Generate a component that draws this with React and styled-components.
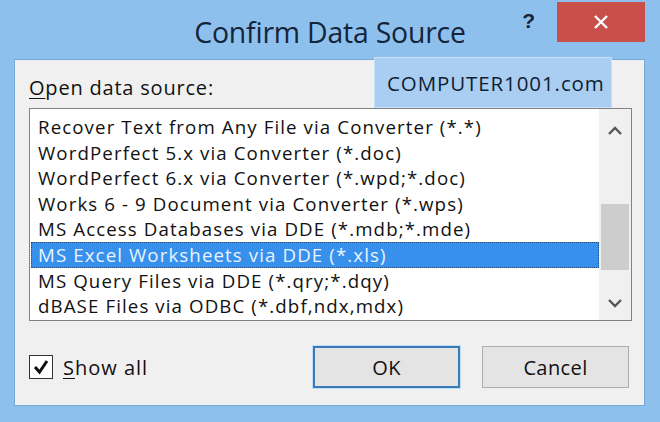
import React, { useState } from 'react';
import styled, { createGlobalStyle } from 'styled-components';

const GlobalStyle = createGlobalStyle`
  html, body {
    margin: 0;
    padding: 0;
    background: #8ec0ee;
  }
  body {
    font-family: "Open Sans", "Noto Sans", sans-serif;
  }
`;

const Window = styled.div`
  width: 660px;
  height: 422px;
  background: #8ec0ee;
  display: flex;
  flex-direction: column;
  box-sizing: border-box;
  overflow: hidden;
`;

const TitleBar = styled.header`
  height: 59px;
  display: grid;
  grid-template-columns: 1fr auto 1fr;
  align-items: start;
`;

const Title = styled.h1`
  grid-column: 2;
  margin: 13px 0 0;
  font-weight: 400;
  font-size: 28.4px;
  color: #14243a;
  letter-spacing: -0.2px;
`;

const Controls = styled.div`
  grid-column: 3;
  justify-self: end;
  display: flex;
  align-items: flex-start;
  margin-right: 15px;
`;

const HelpButton = styled.span`
  margin: 9px 22px 0 0;
  font: 700 21px "Liberation Sans", Arial, sans-serif;
  color: #14243a;
`;

const CloseButton = styled.div`
  width: 88px;
  height: 40px;
  margin-top: 2px;
  background: #c9504a;
  display: flex;
  align-items: center;
  justify-content: center;
`;

const Client = styled.main`
  position: relative;
  flex: 1;
  margin: 0 15px 16px 14px;
  background: #f0f0f0;
  border: 1px solid #79a9d8;
  padding: 0 14px;
  display: flex;
  flex-direction: column;
`;

const Watermark = styled.div`
  position: absolute;
  left: 359px;
  top: -3px;
  width: 238px;
  height: 51px;
  box-sizing: border-box;
  background: #a9cef2;
  border: 1px solid #c8e1f8;
  display: flex;
  align-items: center;
  padding-left: 12px;
  font-size: 20.5px;
  color: #0f1e33;
  letter-spacing: 0.9px;
`;

const Label = styled.div`
  margin-top: 14px;
  height: 34px;
  font-size: 20px;
  letter-spacing: 0.8px;
  color: #111;
  u { text-decoration-thickness: 1px; text-underline-offset: 3px; }
`;

const ListBox = styled.div`
  width: 603px;
  height: 213px;
  box-sizing: border-box;
  border: 1px solid #828282;
  background: #fff;
  display: flex;
`;

const Items = styled.ul`
  flex: 1;
  margin: 0;
  padding: 5px 0 0 1px;
  list-style: none;
`;

const Item = styled.li`
  height: 25.6px;
  line-height: 25.6px;
  padding-left: 7px;
  font-size: 18.7px;
  letter-spacing: 1.1px;
  white-space: nowrap;
  color: ${p => (p.$selected ? '#e9f3ff' : '#111')};
  background: ${p => (p.$selected ? '#3790ec' : 'transparent')};
  outline: ${p => (p.$selected ? '1px dotted #1c4f86' : 'none')};
  outline-offset: -1px;
`;

const ScrollBar = styled.div`
  width: 32px;
  background: #f0f0f0;
  display: flex;
  flex-direction: column;
  align-items: center;
`;

const Arrow = styled.div`
  height: 34px;
  display: flex;
  align-items: center;
  justify-content: center;
  margin-top: ${p => p.$top || 0}px;
`;

const Track = styled.div`
  flex: 1;
  width: 100%;
  display: flex;
  flex-direction: column;
  align-items: center;
`;

const Thumb = styled.div`
  width: 28px;
  height: 66px;
  margin-top: 56px;
  background: #cdcdcd;
`;

const Footer = styled.footer`
  display: flex;
  align-items: center;
  margin-top: 25px;
`;

const CheckLabel = styled.label`
  display: flex;
  align-items: center;
  gap: 10px;
  font-size: 20px;
  letter-spacing: 1px;
  color: #111;
  u { text-decoration-thickness: 1px; text-underline-offset: 3px; }
`;

const Box = styled.span`
  width: 22px;
  height: 22px;
  border: 1px solid #333;
  background: #fff;
  display: flex;
  align-items: center;
  justify-content: center;
`;

const Buttons = styled.div`
  margin-left: auto;
  margin-right: 1px;
  display: flex;
  gap: 22px;
`;

const Button = styled.button`
  width: 147px;
  height: 42px;
  box-sizing: border-box;
  font-family: "Open Sans", "Noto Sans", sans-serif;
  font-size: 20px;
  letter-spacing: 0.4px;
  color: #111;
  background: #e4e4e4;
  border: ${p => (p.$default ? '2px solid #3b7bb5' : '1px solid #adadad')};
  box-shadow: ${p => (p.$default ? '0 0 0 1px #bfe0f8' : 'none')};
  padding: 0;
`;

const Chevron = ({ up }) => (
  <svg width="16" height="10" viewBox="0 0 16 10">
    <path
      d={up ? 'M2 8 L8 2 L14 8' : 'M2 2 L8 8 L14 2'}
      fill="none"
      stroke="#555"
      strokeWidth="2.4"
    />
  </svg>
);

const sources = [
  'Recover Text from Any File via Converter (*.*)',
  'WordPerfect 5.x via Converter (*.doc)',
  'WordPerfect 6.x via Converter (*.wpd;*.doc)',
  'Works 6 - 9 Document via Converter (*.wps)',
  'MS Access Databases via DDE (*.mdb;*.mde)',
  'MS Excel Worksheets via DDE (*.xls)',
  'MS Query Files via DDE (*.qry;*.dqy)',
  'dBASE Files via ODBC (*.dbf,ndx,mdx)',
];

export default function App() {
  const [selected, setSelected] = useState(5);

  return (
    <>
      <GlobalStyle />
      <Window>
        <TitleBar>
          <Title>Confirm Data Source</Title>
          <Controls>
            <HelpButton>?</HelpButton>
            <CloseButton>
              <svg width="16" height="16" viewBox="0 0 16 16">
                <path d="M2 2 L14 14 M14 2 L2 14" stroke="#fff" strokeWidth="2.4" />
              </svg>
            </CloseButton>
          </Controls>
        </TitleBar>
        <Client>
          <Watermark>COMPUTER1001.com</Watermark>
          <Label><u>O</u>pen data source:</Label>
          <ListBox>
            <Items>
              {sources.map((s, i) => (
                <Item key={s} $selected={i === selected} onClick={() => setSelected(i)}>
                  {s}
                </Item>
              ))}
            </Items>
            <ScrollBar>
              <Arrow $top={5}><Chevron up /></Arrow>
              <Track><Thumb /></Track>
              <Arrow><Chevron /></Arrow>
            </ScrollBar>
          </ListBox>
          <Footer>
            <CheckLabel>
              <Box>
                <svg width="18" height="18" viewBox="0 0 18 18">
                  <path d="M3 9 L7.5 14 L15 3" fill="none" stroke="#111" strokeWidth="3" />
                </svg>
              </Box>
              <span><u>S</u>how all</span>
            </CheckLabel>
            <Buttons>
              <Button $default>OK</Button>
              <Button>Cancel</Button>
            </Buttons>
          </Footer>
        </Client>
      </Window>
    </>
  );
}
